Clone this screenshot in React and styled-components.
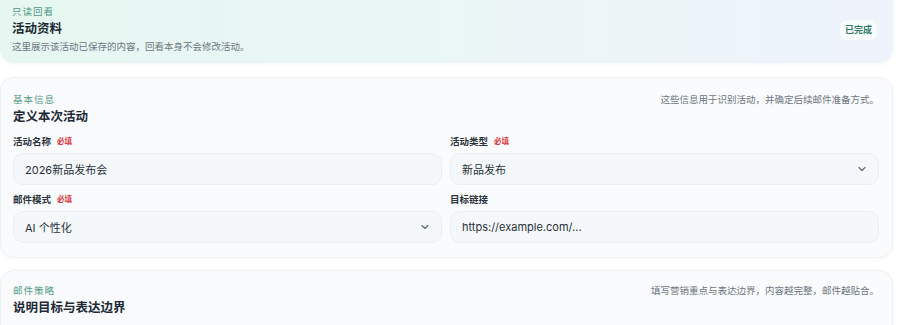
import styled, { createGlobalStyle } from "styled-components";

const GlobalStyle = createGlobalStyle`
  html, body {
    margin: 0;
    padding: 0;
    background: #ffffff;
    font-family: Inter, "Noto Sans CJK SC", sans-serif;
    overflow: hidden;
  }
`;

const basicFields = [
  { label: "活动名称", required: true, value: "2026新品发布会" },
  { label: "活动类型", required: true, value: "新品发布", select: true },
  { label: "邮件模式", required: true, value: "AI 个性化", select: true },
  { label: "目标链接", value: "https://example.com/..." },
];

const Chevron = () => (
  <svg width="12" height="12" viewBox="0 0 24 24" fill="none" stroke="#5b6470" strokeWidth="2.2" strokeLinecap="round" strokeLinejoin="round">
    <path d="m6 9 6 6 6-6" />
  </svg>
);

const App = () => {
  return (
    <Page>
      <GlobalStyle />
      <HeroCard>
        <div>
          <Eyebrow>只读回看</Eyebrow>
          <Title>活动资料</Title>
          <Desc>这里展示该活动已保存的内容，回看本身不会修改活动。</Desc>
        </div>
        <Badge>已完成</Badge>
      </HeroCard>

      <Section>
        <SectionHead>
          <div>
            <Eyebrow>基本信息</Eyebrow>
            <Title>定义本次活动</Title>
          </div>
          <Hint>这些信息用于识别活动，并确定后续邮件准备方式。</Hint>
        </SectionHead>
        <Grid>
          {basicFields.map((f) => (
            <Field key={f.label}>
              <Label>
                {f.label}
                {f.required && <Required>必填</Required>}
              </Label>
              <Box>
                <span>{f.value}</span>
                {f.select && <Chevron />}
              </Box>
            </Field>
          ))}
        </Grid>
      </Section>

      <Section $tight>
        <SectionHead>
          <div>
            <Eyebrow>邮件策略</Eyebrow>
            <Title>说明目标与表达边界</Title>
          </div>
          <Hint>填写营销重点与表达边界，内容越完整，邮件越贴合。</Hint>
        </SectionHead>
        <Spacer />
      </Section>
    </Page>
  );
};

export default App;

const Page = styled.div`
  width: 893px;
  display: flex;
  flex-direction: column;
  gap: 12px;
`;

const HeroCard = styled.div`
  margin-top: -10px;
  margin-bottom: 2px;
  padding: 15px 16px 9px 12px;
  display: flex;
  justify-content: space-between;
  align-items: center;
  border-radius: 14px;
  background: linear-gradient(90deg, #e6f7f1 0%, #ebf6f6 50%, #eef3fc 100%);
  box-shadow: 0 1px 4px rgba(60, 120, 110, 0.06);
`;

const Eyebrow = styled.div`
  font-size: 9.5px;
  line-height: 14px;
  letter-spacing: 1px;
  color: #4f9a80;
`;

const Title = styled.div`
  margin-top: 1px;
  font-size: 12.5px;
  line-height: 18px;
  font-weight: 700;
  color: #1e2a36;
`;

const Desc = styled.div`
  margin-top: 2px;
  font-size: 9.5px;
  line-height: 14px;
  color: #6d7681;
`;

const Badge = styled.div`
  padding: 3px 5px;
  border-radius: 7px;
  background: #f9fcfc;
  color: #2f7a61;
  font-size: 9px;
  font-weight: 700;
  line-height: 14px;
`;

const Section = styled.section`
  padding: ${(p) => (p.$tight ? "13px" : "15px")} 13px 14px 12px;
  border: 1px solid #eef1f4;
  border-radius: 14px;
  background: #fafbfd;
  box-shadow: 0 1px 4px rgba(30, 50, 80, 0.04);
`;

const SectionHead = styled.div`
  display: flex;
  justify-content: space-between;
  align-items: flex-start;
`;

const Hint = styled.div`
  font-size: 9.5px;
  line-height: 14px;
  color: #6d7681;
`;

const Grid = styled.div`
  margin-top: 9px;
  display: grid;
  grid-template-columns: 429px 429px;
  column-gap: 8px;
  row-gap: 8px;
`;

const Field = styled.div`
  display: flex;
  flex-direction: column;
  gap: 4px;
`;

const Label = styled.div`
  display: flex;
  align-items: center;
  gap: 6px;
  font-size: 9.5px;
  line-height: 14px;
  font-weight: 600;
  color: #2a323c;
`;

const Required = styled.span`
  font-size: 7.5px;
  font-weight: 700;
  color: #d8343c;
`;

const Box = styled.div`
  height: 32px;
  box-sizing: border-box;
  padding: 0 10px 0 11px;
  display: flex;
  align-items: center;
  justify-content: space-between;
  border: 1px solid #ebeff2;
  border-radius: 10px;
  background: #f5f8fa;
  font-size: 11px;
  color: #27303a;
`;

const Spacer = styled.div`
  height: 60px;
`;
